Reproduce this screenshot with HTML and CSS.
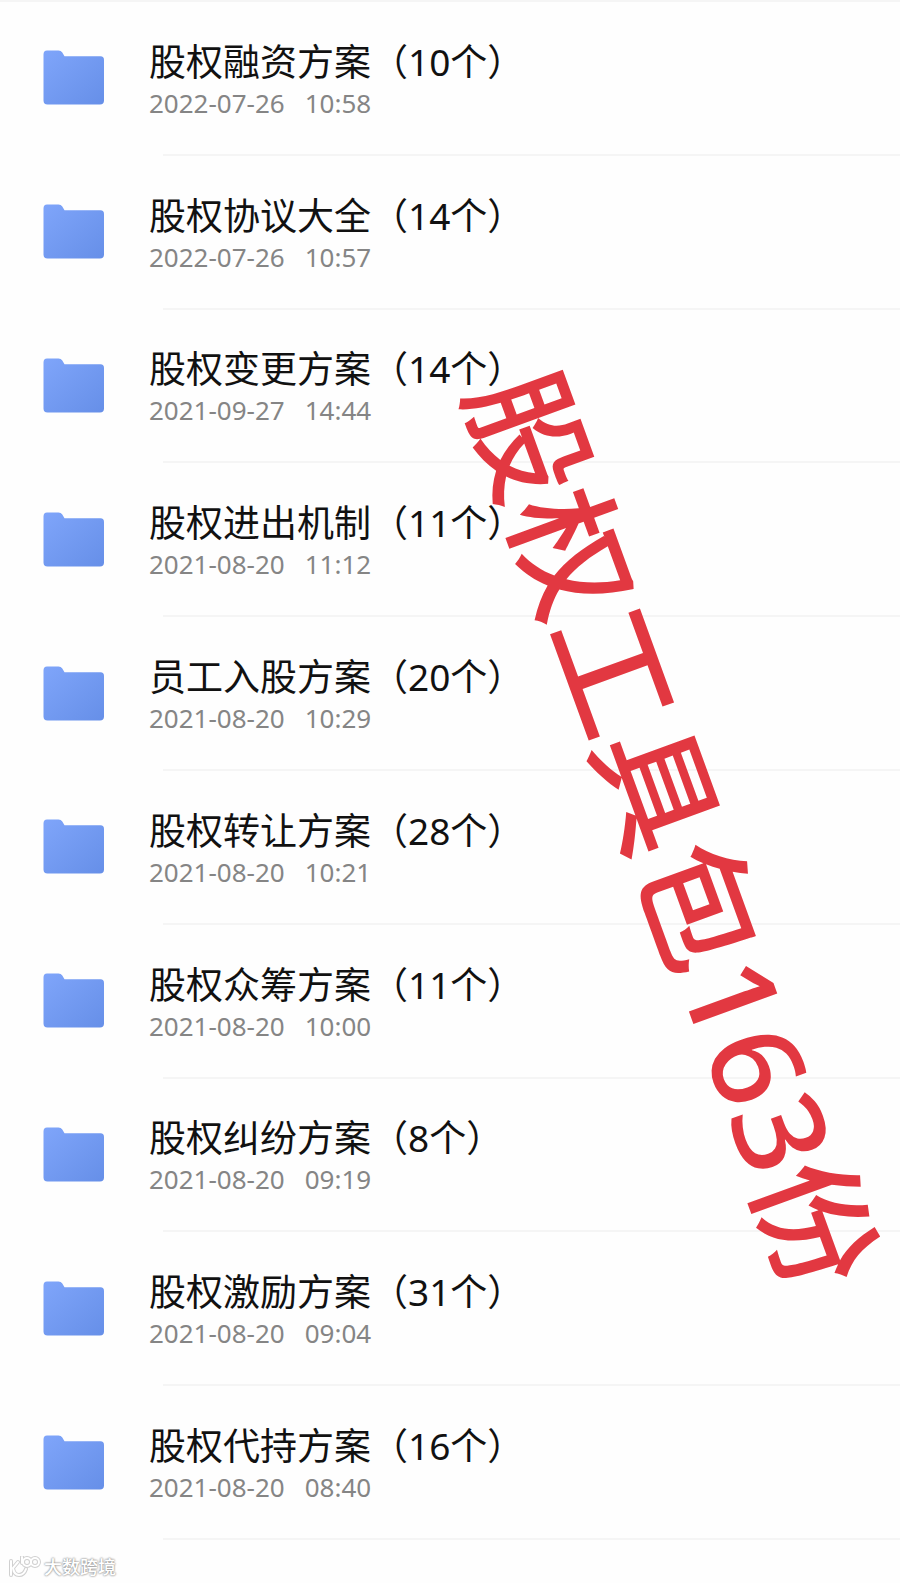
FILE: index.html
```html
<!DOCTYPE html>
<html lang="zh-CN">
<head>
  <meta charset="UTF-8">
  <meta name="viewport" content="width=device-width, initial-scale=1">
  <title>股权工具包</title>
  <link rel="stylesheet" href="styles.css">
</head>
<body>
  <svg class="defs" width="0" height="0" aria-hidden="true">
    <linearGradient id="blue" x1="0" y1="0" x2="1" y2="1">
      <stop offset="0" stop-color="#7fa5fa"/>
      <stop offset="1" stop-color="#668fe8"/>
    </linearGradient>
    <symbol id="folder" viewBox="0 0 62 55">
      <path fill="url(#blue)" d="M4 0.5H15.5Q18 0.5 19.3 2.6L21.5 6.3H57.5Q61 6.3 61 10V50.5Q61 54.5 57 54.5H4.5Q0.5 54.5 0.5 50.5V4.5Q0.5 0.5 4 0.5Z"/>
    </symbol>
  </svg>
  <main class="page">
    <ul class="files">
      <li class="file"><svg class="icon"><use href="#folder"/></svg><div class="info"><h2>股权融资方案（10个）</h2><p class="date"><span>2022-07-26</span><span>10:58</span></p></div></li>
      <li class="file"><svg class="icon"><use href="#folder"/></svg><div class="info"><h2>股权协议大全（14个）</h2><p class="date"><span>2022-07-26</span><span>10:57</span></p></div></li>
      <li class="file"><svg class="icon"><use href="#folder"/></svg><div class="info"><h2>股权变更方案（14个）</h2><p class="date"><span>2021-09-27</span><span>14:44</span></p></div></li>
      <li class="file"><svg class="icon"><use href="#folder"/></svg><div class="info"><h2>股权进出机制（11个）</h2><p class="date"><span>2021-08-20</span><span>11:12</span></p></div></li>
      <li class="file"><svg class="icon"><use href="#folder"/></svg><div class="info"><h2>员工入股方案（20个）</h2><p class="date"><span>2021-08-20</span><span>10:29</span></p></div></li>
      <li class="file"><svg class="icon"><use href="#folder"/></svg><div class="info"><h2>股权转让方案（28个）</h2><p class="date"><span>2021-08-20</span><span>10:21</span></p></div></li>
      <li class="file"><svg class="icon"><use href="#folder"/></svg><div class="info"><h2>股权众筹方案（11个）</h2><p class="date"><span>2021-08-20</span><span>10:00</span></p></div></li>
      <li class="file"><svg class="icon"><use href="#folder"/></svg><div class="info"><h2>股权纠纷方案（8个）</h2><p class="date"><span>2021-08-20</span><span>09:19</span></p></div></li>
      <li class="file"><svg class="icon"><use href="#folder"/></svg><div class="info"><h2>股权激励方案（31个）</h2><p class="date"><span>2021-08-20</span><span>09:04</span></p></div></li>
      <li class="file"><svg class="icon"><use href="#folder"/></svg><div class="info"><h2>股权代持方案（16个）</h2><p class="date"><span>2021-08-20</span><span>08:40</span></p></div></li>
    </ul>
    <footer class="brand">
      <svg class="logo" viewBox="0 0 34 22" aria-hidden="true">
        <g class="logo-edge">
          <path d="M3 5V19M10 6L5 12Q6 19 11 19T18 13"/>
          <path d="M14 1V7"/><circle cx="19" cy="6" r="4"/><circle cx="27" cy="6" r="4"/>
        </g>
        <g class="logo-line">
          <path d="M3 5V19M10 6L5 12Q6 19 11 19T18 13"/>
          <path d="M14 1V7"/><circle cx="19" cy="6" r="4"/><circle cx="27" cy="6" r="4"/>
        </g>
      </svg>
      <span>大数跨境</span>
    </footer>
    <div class="stamp">股权工具包163份</div>
  </main>
</body>
</html>
```
FILE: styles.css
```css
body {margin:0; background:#fefefe; font-family:"Noto Sans", "Noto Sans CJK SC", sans-serif;}
.defs {position:absolute;}
.page {position:relative; display:flex; flex-direction:column; min-height:100vh; overflow:hidden; box-sizing:border-box; border-top:2px solid #f5f5f5;}
.files {flex:1; display:flex; flex-direction:column; list-style:none; margin:0; padding:0;}
.file {flex:1; display:flex; align-items:center; gap:44px; padding:0 0 2px 43px; background:linear-gradient(#f5f5f5, #f5f5f5) 163px 100% / 100% 2px no-repeat;}
.icon {width:62px; height:55px;}
.info {display:flex; flex-direction:column; padding-top:2px;}
h2 {margin:0; font-size:37px; line-height:48px; font-weight:400; color:#111;}
.date {display:flex; gap:20px; margin:0; font-size:26px; line-height:34px; color:#858585;}
.brand {display:flex; align-items:center; gap:2px; height:43px; padding:10px 0 0 8px; box-sizing:border-box; font-size:18px; font-weight:500; line-height:24px; color:#fff; text-shadow:0 0 2px #888, 0 0 2px #999;}
.logo {width:34px; height:22px;}
.logo-edge, .logo-line {fill:none; stroke-linecap:round;}
.logo-edge {stroke:#d0d0d0; stroke-width:4;}
.logo-line {stroke:#fff; stroke-width:2;}

/* slanted red title over the list */
.stamp {position:absolute; left:568px; top:353px; font-size:125px; font-weight:500; line-height:125px; white-space:nowrap; color:#e23841; transform:rotate(70deg); transform-origin:0 0;}
```
